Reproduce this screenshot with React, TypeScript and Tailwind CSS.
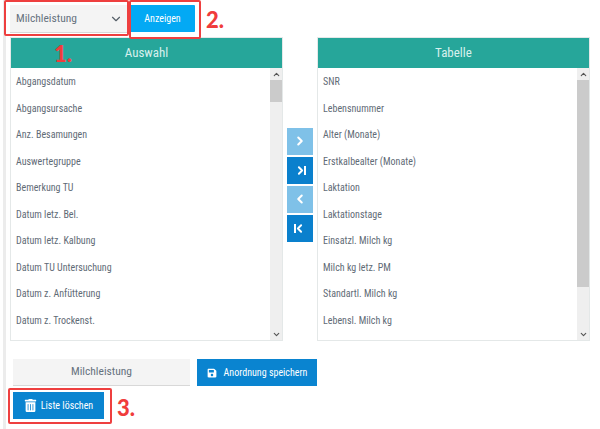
import { ChevronDown, ChevronLeft, ChevronRight, ChevronUp } from 'lucide-react';
import { FaSave, FaTrashAlt } from 'react-icons/fa';

const auswahl = [
  'Abgangsdatum',
  'Abgangsursache',
  'Anz. Besamungen',
  'Auswertegruppe',
  'Bemerkung TU',
  'Datum letz. Bel.',
  'Datum letz. Kalbung',
  'Datum TU Untersuchung',
  'Datum z. Anfütterung',
  'Datum z. Trockenst.',
];

const tabelle = [
  'SNR',
  'Lebensnummer',
  'Alter (Monate)',
  'Erstkalbealter (Monate)',
  'Laktation',
  'Laktationstage',
  'Einsatzl. Milch kg',
  'Milch kg letz. PM',
  'Standartl. Milch kg',
  'Lebensl. Milch kg',
];

function ListPanel({ title, items, thumbClass }: { title: string; items: string[]; thumbClass: string }) {
  return (
    <div className="w-[273px] h-[304px] flex flex-col border border-[#e4e8e8]">
      <div className="h-[30px] shrink-0 flex items-center justify-center bg-[#26a69a] text-[#d8f0ed] text-[13px]">
        {title}
      </div>
      <div className="flex flex-1 min-h-0">
        <ul className="flex-1 overflow-hidden pl-[5px] pt-[0.5px]">
          {items.map((item) => (
            <li key={item} className="h-[26.5px] flex items-center text-[10px] text-[#5f6b76]">
              {item}
            </li>
          ))}
        </ul>
        <div className="w-[12px] flex flex-col bg-[#efefef]">
          <div className="h-[12px] flex items-center justify-center">
            <ChevronUp size={9} strokeWidth={3} className="text-[#555]" />
          </div>
          <div className="flex-1">
            <div className={`bg-[#cbcbcb] ${thumbClass}`} />
          </div>
          <div className="h-[12px] flex items-center justify-center">
            <ChevronDown size={9} strokeWidth={3} className="text-[#555]" />
          </div>
        </div>
      </div>
    </div>
  );
}

function MoveButton({ light, children }: { light?: boolean; children: React.ReactNode }) {
  return (
    <button className={`w-[26px] h-[27px] flex items-center justify-center text-white ${light ? 'bg-[#7fc1e8]' : 'bg-[#0a80cd]'}`}>
      {children}
    </button>
  );
}

function Annotation({ className, children }: { className: string; children: React.ReactNode }) {
  return (
    <span className={`absolute text-[22px] leading-none font-black font-['Lato',sans-serif] [font-stretch:normal] text-[#f03c3c] ${className}`}>
      {children}
    </span>
  );
}

export default function App() {
  return (
    <div className="relative w-[600px] h-[429px] bg-white overflow-hidden font-['Roboto',sans-serif] [font-stretch:75%]">
      <div className="ml-[3px] h-full border-l-[3px] border-[#ececec] pl-[4px] pt-[5px]">
        <div className="flex items-stretch h-[28px] gap-[3px]">
          <div className="w-[117px] bg-[#f4f4f4] border-b border-[#d8d8d8] flex items-center justify-between pl-[6px] pr-[4px] text-[11.5px] text-[#66727e]">
            Milchleistung
            <ChevronDown size={14} strokeWidth={2} className="text-[#555f68]" />
          </div>
          <button className="w-[65px] mb-[1px] bg-[#03a9f4] text-white text-[10px] rounded-[1px]">Anzeigen</button>
        </div>

        <div className="flex items-center mt-[4px]">
          <ListPanel title="Auswahl" items={auswahl} thumbClass="h-[22px]" />
          <div className="w-[34px] flex flex-col items-center gap-[2px] mb-[9px]">
            <MoveButton light>
              <ChevronRight size={14} strokeWidth={3.5} />
            </MoveButton>
            <MoveButton>
              <span className="flex items-center">
                <ChevronRight size={13} strokeWidth={3.5} className="-mr-[3px]" />
                <span className="w-[2px] h-[9px] bg-white" />
              </span>
            </MoveButton>
            <MoveButton light>
              <ChevronLeft size={14} strokeWidth={3.5} />
            </MoveButton>
            <MoveButton>
              <span className="flex items-center">
                <span className="w-[2px] h-[9px] bg-white" />
                <ChevronLeft size={13} strokeWidth={3.5} className="-ml-[3px]" />
              </span>
            </MoveButton>
          </div>
          <ListPanel title="Tabelle" items={tabelle} thumbClass="h-[207px]" />
        </div>

        <div className="flex items-stretch h-[27px] mt-[18px] ml-[3px] gap-[7px]">
          <div className="w-[177px] bg-[#f4f4f4] border-b border-[#d8d8d8] flex items-center justify-center text-[11.5px] text-[#66727e]">
            Milchleistung
          </div>
          <button className="w-[120px] bg-[#0a84d0] text-white text-[10px] flex items-center justify-center gap-[7px]">
            <FaSave size={10} />
            Anordnung speichern
          </button>
        </div>

        <button className="ml-[3px] mt-[6px] w-[91px] h-[27px] bg-[#0a84d0] text-white text-[10px] flex items-center justify-center gap-[4px]">
          <FaTrashAlt size={13} />
          Liste löschen
        </button>
      </div>

      <div className="absolute left-[4px] top-0 w-[125px] h-[36px] border-[2px] border-[#ee3f3f] rounded-[2px]" />
      <div className="absolute left-[129px] top-0 w-[72px] h-[39px] border-[2px] border-[#ee3f3f] rounded-[2px]" />
      <div className="absolute left-[8px] top-[388px] w-[104px] h-[36px] border-[2px] border-[#ee3f3f] rounded-[2px]" />
      <Annotation className="left-[54px] top-[43px]">1.</Annotation>
      <Annotation className="left-[206px] top-[9px]">2.</Annotation>
      <Annotation className="left-[117px] top-[397px]">3.</Annotation>
    </div>
  );
}
